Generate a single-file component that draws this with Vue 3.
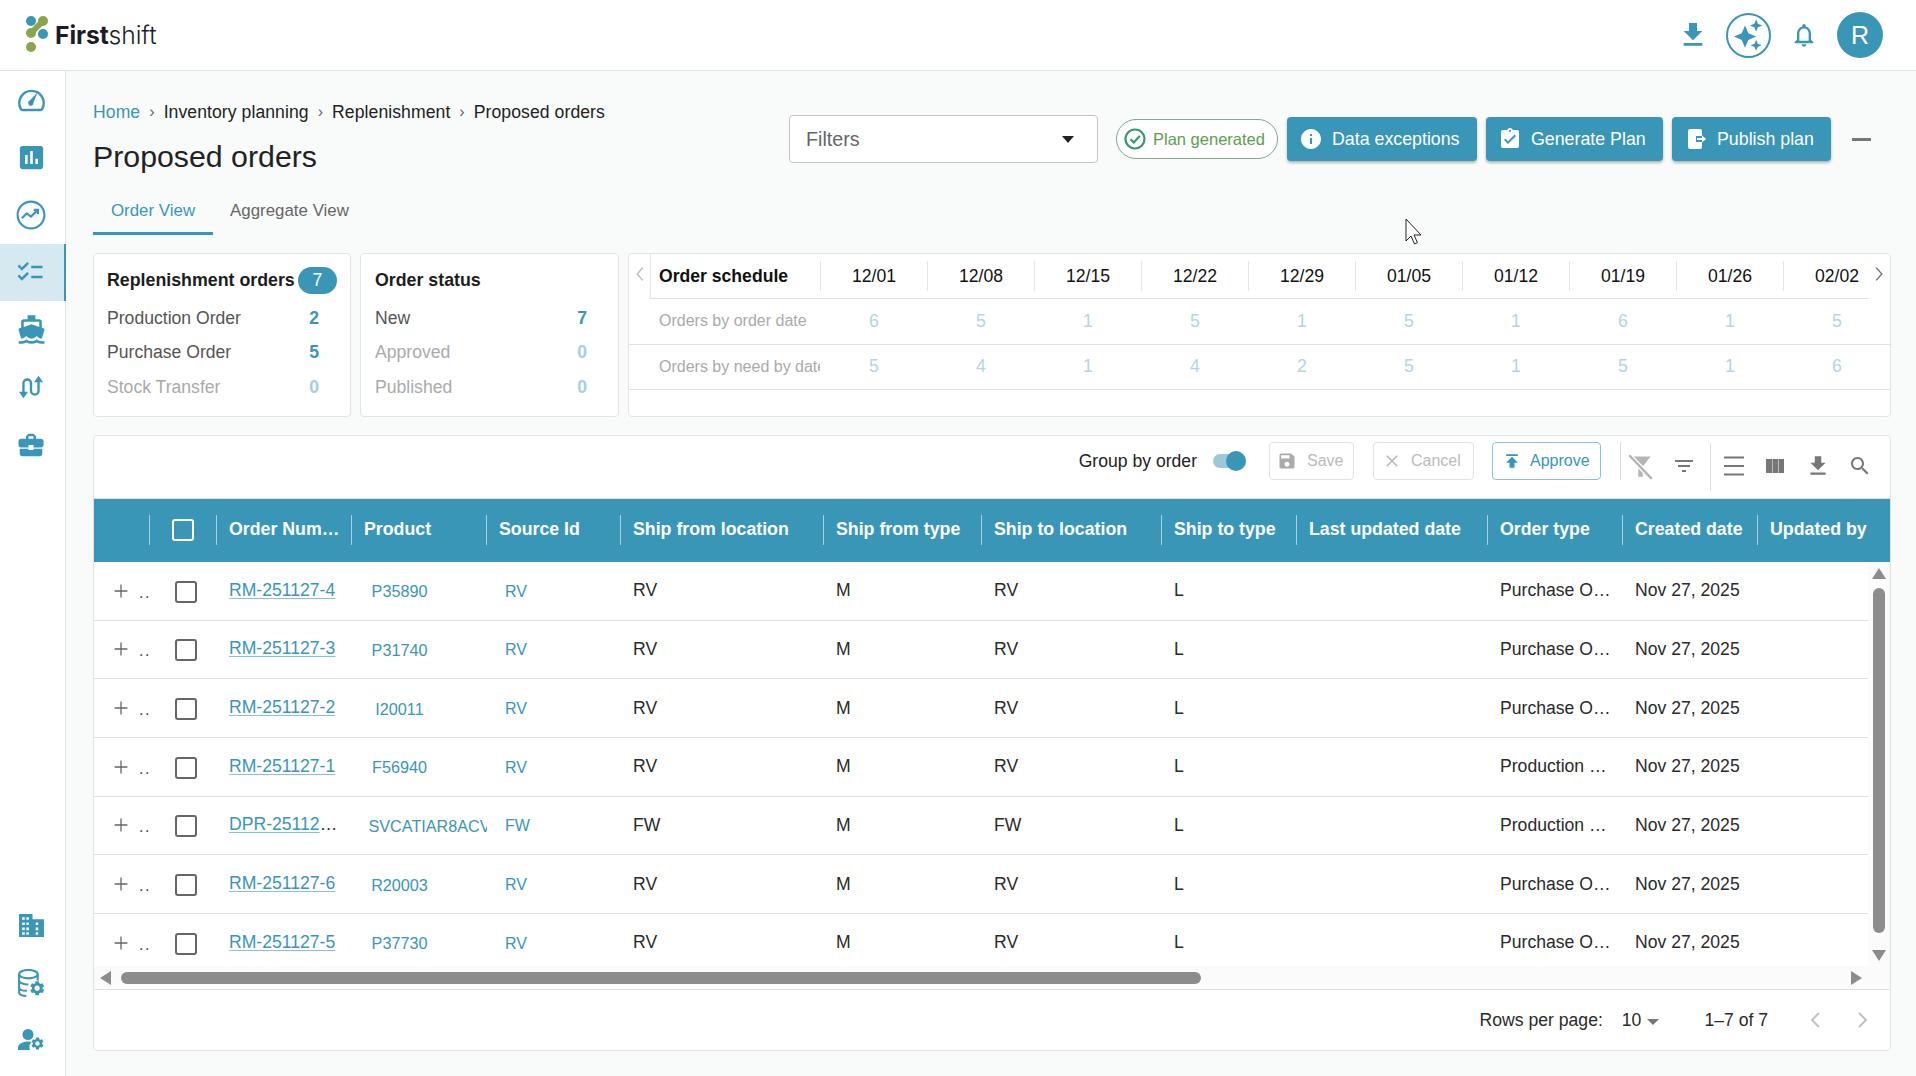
<script setup>
const gear = 'M19.14 12.94c.04-.3.06-.61.06-.94 0-.32-.02-.64-.07-.94l2.03-1.58c.18-.14.23-.41.12-.61l-1.92-3.32c-.12-.22-.37-.29-.59-.22l-2.39.96c-.5-.38-1.03-.7-1.62-.94l-.36-2.54c-.04-.24-.24-.41-.48-.41h-3.84c-.24 0-.43.17-.47.41l-.36 2.54c-.59.24-1.13.57-1.62.94l-2.39-.96c-.22-.08-.47 0-.59.22L2.74 8.87c-.12.21-.08.47.12.61l2.03 1.58c-.05.3-.09.63-.09.94s.02.64.07.94l-2.03 1.58c-.18.14-.23.41-.12.61l1.92 3.32c.12.22.37.29.59.22l2.39-.96c.5.38 1.03.7 1.62.94l.36 2.54c.05.24.24.41.48.41h3.84c.24 0 .44-.17.47-.41l.36-2.54c.59-.24 1.13-.56 1.62-.94l2.39.96c.22.08.47 0 .59-.22l1.92-3.32c.12-.22.07-.47-.12-.61l-2.01-1.58zM12 15.6c-1.98 0-3.6-1.62-3.6-3.6s1.62-3.6 3.6-3.6 3.6 1.62 3.6 3.6-1.62 3.6-3.6 3.6z'
const headers = ['Order Number', 'Product', 'Source Id', 'Ship from location', 'Ship from type', 'Ship to location', 'Ship to type', 'Last updated date', 'Order type', 'Created date', 'Updated by']
const rows = [
  ['RM-251127-4', 'P35890', 'RV', 'Purchase Order'],
  ['RM-251127-3', 'P31740', 'RV', 'Purchase Order'],
  ['RM-251127-2', 'I20011', 'RV', 'Purchase Order'],
  ['RM-251127-1', 'F56940', 'RV', 'Production Order'],
  ['DPR-251127-1', 'SVCATIAR8ACV', 'FW', 'Production Order'],
  ['RM-251127-6', 'R20003', 'RV', 'Purchase Order'],
  ['RM-251127-5', 'P37730', 'RV', 'Purchase Order'],
]
const dates = ['12/01', '12/08', '12/15', '12/22', '12/29', '01/05', '01/12', '01/19', '01/26', '02/02']
const byOrder = [6, 5, 1, 5, 1, 5, 1, 6, 1, 5]
const byNeed = [5, 4, 1, 4, 2, 5, 1, 5, 1, 6]
const kinds = [
  { label: 'Production Order', n: 2 },
  { label: 'Purchase Order', n: 5 },
  { label: 'Stock Transfer', n: 0 },
]
const statuses = [
  { label: 'New', n: 7 },
  { label: 'Approved', n: 0 },
  { label: 'Published', n: 0 },
]
</script>

<template>
  <div class="app">
    <header class="top">
      <div class="logo">
        <svg class="logo-mark" viewBox="0 0 30 40" width="30" height="40">
          <path d="M6 17 L18 5" stroke="#8aa64a" stroke-width="6" />
          <circle cx="6" cy="5" r="5" fill="#3a96b7" />
          <circle cx="18" cy="5" r="5" fill="#8aa64a" />
          <circle cx="6" cy="17" r="5" fill="#8aa64a" />
          <circle cx="18" cy="18" r="5" fill="#3a96b7" />
          <circle cx="6" cy="31" r="5" fill="#8aa64a" />
        </svg>
        <span class="logo-text"><b>First</b>shift</span>
      </div>
      <div class="top-icons">
        <svg class="ic-dl" viewBox="0 0 24 24" width="32" height="32"><path d="M19 9h-4V3H9v6H5l7 7 7-7zM5 18v2h14v-2H5z" /></svg>
        <span class="ai">
          <svg viewBox="0 0 24 24" width="38" height="38">
            <path d="M9.5 6 11.6 10.900 16.500 13 11.600 15.100 9.500 20 7.400 15.100 2.500 13 7.400 10.900z" />
            <path d="M16.500 2 17.600 4.900 20.500 6 17.600 7.100 16.500 10 15.400 7.100 12.500 6 15.400 4.900z" />
            <path d="M16.500 15 17.500 17.500 20 18.500 17.500 19.500 16.500 22 15.500 19.500 13 18.500 15.500 17.500z" />
          </svg>
        </span>
        <svg class="ic-bell" viewBox="0 0 24 24" width="28" height="28"><path d="M12 22c1.1 0 2-.9 2-2h-4c0 1.1.9 2 2 2zm6-6v-5c0-3.07-1.63-5.64-4.5-6.32V4c0-.83-.67-1.5-1.5-1.5s-1.5.67-1.5 1.5v.68C7.64 5.36 6 7.92 6 11v5l-2 2v1h16v-1l-2-2zm-2 1H8v-6c0-2.48 1.51-4.5 4-4.5s4 2.02 4 4.5v6z" /></svg>
        <span class="avatar">R</span>
      </div>
    </header>

    <div class="body">
      <nav class="side">
        <div class="side-group">
          <a class="side-item">
            <svg viewBox="0 0 28 28" width="31" height="31" class="stroke">
              <path d="M6 23.5h16a2 2 0 0 0 1.8-1.3A11 11 0 1 0 4.2 22.200a2 2 0 0 0 1.800 1.300z" stroke-width="2.200" />
              <path class="solid" d="M19.500 7.500 15.800 16.800a2.400 2.400 0 1 1-3.300-1.800z" />
            </svg>
          </a>
          <a class="side-item"><svg viewBox="0 0 24 24" width="31" height="31"><path d="M19 3H5c-1.100 0-2 .9-2 2v14c0 1.100.9 2 2 2h14c1.100 0 2-.9 2-2V5c0-1.100-.9-2-2-2zM9 17H7v-7h2v7zm4 0h-2V7h2v10zm4 0h-2v-4h2v4z" /></svg></a>
          <a class="side-item">
            <svg viewBox="0 0 28 28" width="30" height="30" class="stroke">
              <circle cx="14" cy="14" r="12.500" stroke-width="2" />
              <path d="M5.500 17 10 12.500 14 15.500 20 9.500M16.500 9.200H20.500V13" stroke-width="2" />
            </svg>
          </a>
          <a class="side-item active"><svg viewBox="0 0 24 24" width="30" height="30"><path d="M22 7h-9v2h9V7zm0 8h-9v2h9v-2zM5.540 11 2 7.460l1.410-1.410 2.120 2.120 4.240-4.240 1.410 1.410L5.540 11zm0 8L2 15.460l1.410-1.410 2.120 2.120 4.240-4.240 1.410 1.410L5.540 19z" /></svg></a>
          <a class="side-item"><svg viewBox="0 0 24 24" width="31" height="31"><path d="M20 21c-1.390 0-2.780-.47-4-1.320-2.440 1.710-5.560 1.710-8 0C6.780 20.530 5.390 21 4 21H2v2h2c1.380 0 2.740-.35 4-.99 2.520 1.290 5.480 1.290 8 0 1.260.65 2.620.99 4 .99h2v-2h-2zM3.950 19H4c1.600 0 3.020-.88 4-2 .98 1.120 2.400 2 4 2s3.020-.88 4-2c.98 1.120 2.400 2 4 2h.05l1.890-6.680c.08-.26.06-.54-.06-.78s-.34-.42-.6-.5L20 10.620V6c0-1.100-.9-2-2-2h-3V1H9v3H6c-1.100 0-2 .9-2 2v4.620l-1.290.42c-.26.08-.48.26-.6.5s-.15.52-.06.78L3.950 19zM6 6h12v3.970L12 8 6 9.970V6z" /></svg></a>
          <a class="side-item">
            <svg viewBox="0 0 26 26" width="28" height="28" class="stroke">
              <path d="M6 20V9.500a3.500 3.500 0 0 1 7 0v7a3.500 3.500 0 0 0 7 0V6" stroke-width="2.200" />
              <path class="solid" d="M1.800 17.500h8.400L6 23.500zM15.800 8.500h8.400L20 2.500z" />
            </svg>
          </a>
          <a class="side-item"><svg viewBox="0 0 24 24" width="30" height="30"><path d="M10 16v-1H3.010L3 19c0 1.110.89 2 2 2h14c1.110 0 2-.89 2-2v-4h-7v1h-4zm10-9h-4.010V5l-2-2h-4l-2 2v2H4c-1.100 0-2 .9-2 2v3c0 1.110.89 2 2 2h6v-2h4v2h6c1.100 0 2-.9 2-2V9c0-1.100-.9-2-2-2zm-6 0h-4V5h4v2z" /></svg></a>
        </div>
        <div class="side-group">
          <a class="side-item">
            <svg viewBox="0 0 26 24" width="27" height="25">
              <path fill-rule="evenodd" d="M1 1h13v5h11v17H1zM4 4v2.500h2.500V4zm4 0v2.500h2.500V4zM4 9v2.500h2.500V9zm4 0v2.500h2.500V9zm9 0v2.500h2.500V9zm-9 5v2.500h2.500V14zm-4 0v2.500h2.500V14zm13 0v2.500h2.500V14zM4 18.500V21h2.500v-2.500zm4 0V21h2.500v-2.500zm9 0V21h2.500v-2.500z" />
            </svg>
          </a>
          <a class="side-item">
            <svg viewBox="0 0 28 28" width="29" height="29" class="stroke">
              <ellipse cx="11" cy="6" rx="9" ry="4" stroke-width="2" />
              <path d="M2 6v18c0 1.500 3 3 7 3M2 12c0 2 4 4 9 4M2 18.500c0 2 3 3.500 7.500 3.500M20 6v6" stroke-width="2" />
              <svg x="11" y="11" width="17" height="17" viewBox="0 0 24 24"><path class="solid" :d="gear" /></svg>
            </svg>
          </a>
          <a class="side-item">
            <svg viewBox="0 0 28 24" width="28" height="24">
              <circle cx="11" cy="6.500" r="5.500" />
              <path d="M1 22v-2.500c0-3.500 5-6 10-6 1.200 0 2.300.1 3.300.4A8 8 0 0 0 13 22z" />
              <svg x="13" y="8" width="15" height="15" viewBox="0 0 24 24"><path :d="gear" /></svg>
            </svg>
          </a>
        </div>
      </nav>

      <main class="main">
        <section class="head">
          <div class="head-left">
            <div class="crumbs">
              <span class="home">Home</span><i>›</i><span>Inventory planning</span><i>›</i><span>Replenishment</span><i>›</i><span>Proposed orders</span>
            </div>
            <h1>Proposed orders</h1>
          </div>
          <div class="actions">
            <div class="filters"><span>Filters</span><b class="caret"></b></div>
            <div class="pill">
              <svg viewBox="0 0 24 24" width="24" height="24"><circle cx="12" cy="12" r="9.500" fill="none" stroke="#34996d" stroke-width="2.200" /><path d="M7.500 12.300 10.800 15.500 16.800 9" fill="none" stroke="#34996d" stroke-width="2.200" /></svg>
              <span>Plan generated</span>
            </div>
            <button class="btn w190"><svg viewBox="0 0 24 24" width="24" height="24"><path d="M12 2C6.480 2 2 6.480 2 12s4.480 10 10 10 10-4.480 10-10S17.520 2 12 2zm1 15h-2v-6h2v6zm0-8h-2V7h2v2z" /></svg>Data exceptions</button>
            <button class="btn w177"><svg viewBox="0 0 24 24" width="24" height="24"><path d="M19 3h-4.180C14.400 1.840 13.300 1 12 1c-1.300 0-2.400.84-2.820 2H5c-1.100 0-2 .9-2 2v14c0 1.100.9 2 2 2h14c1.100 0 2-.9 2-2V5c0-1.100-.9-2-2-2zm-7 0c.55 0 1 .45 1 1s-.45 1-1 1-1-.45-1-1 .45-1 1-1zm-2 14-4-4 1.410-1.410L10 14.170l6.590-6.590L18 9l-8 8z" /></svg>Generate Plan</button>
            <button class="btn w159"><svg viewBox="0 0 24 24" width="24" height="24"><path d="M6 2h10a2 2 0 0 1 2 2v5h-6v6h6v5a2 2 0 0 1-2 2H6a2 2 0 0 1-2-2V4a2 2 0 0 1 2-2z" /><path d="M13 11h5V8.500l4 3.500-4 3.500V13h-5z" /></svg>Publish plan</button>
            <span class="minus"></span>
          </div>
        </section>

        <div class="tabs">
          <span class="tab on">Order View</span>
          <span class="tab">Aggregate View</span>
        </div>

        <section class="cards">
          <div class="card c-sum">
            <div class="c-title">Replenishment orders<span class="badge">7</span></div>
            <div v-for="k in kinds" :key="k.label" class="c-row" :class="{ off: !k.n }"><span>{{ k.label }}</span><b>{{ k.n }}</b></div>
          </div>
          <div class="card c-sum">
            <div class="c-title">Order status</div>
            <div v-for="k in statuses" :key="k.label" class="c-row" :class="{ off: !k.n }"><span>{{ k.label }}</span><b>{{ k.n }}</b></div>
          </div>
          <div class="card sched">
            <div class="s-head">
              <span class="s-arrow faint"><svg viewBox="0 0 12 20" width="10" height="16"><path d="M9.500 2 2.500 10l7 8" /></svg></span>
              <div class="s-grid s-dates">
                <b class="s-name">Order schedule</b>
                <span v-for="d in dates" :key="d" class="s-date">{{ d }}</span>
              </div>
              <span class="s-arrow"><svg viewBox="0 0 12 20" width="10" height="16"><path d="M2.500 2l7 8-7 8" /></svg></span>
            </div>
            <div class="s-line">
              <div class="s-grid">
                <span class="s-label">Orders by order date</span>
                <span v-for="(n, i) in byOrder" :key="i" class="s-num">{{ n }}</span>
              </div>
            </div>
            <div class="s-line">
              <div class="s-grid">
                <span class="s-label">Orders by need by date</span>
                <span v-for="(n, i) in byNeed" :key="i" class="s-num">{{ n }}</span>
              </div>
            </div>
          </div>
        </section>

        <section class="card table">
          <div class="tools">
            <span class="group">Group by order</span>
            <span class="toggle"><i></i></span>
            <span class="t-btn save"><svg viewBox="0 0 24 24" width="20" height="20"><path d="M17 3H5c-1.110 0-2 .9-2 2v14c0 1.100.89 2 2 2h14c1.100 0 2-.9 2-2V7l-4-4zm-5 16c-1.660 0-3-1.340-3-3s1.340-3 3-3 3 1.340 3 3-1.340 3-3 3zm3-10H5V5h10v4z" /></svg>Save</span>
            <span class="t-btn cancel"><svg viewBox="0 0 24 24" width="20" height="20"><path d="M19 6.410 17.590 5 12 10.590 6.410 5 5 6.410 10.590 12 5 17.590 6.410 19 12 13.410 17.590 19 19 17.590 13.410 12z" /></svg>Cancel</span>
            <span class="t-btn approve"><svg viewBox="0 0 24 24" width="20" height="20"><path d="M5 4v2h14V4H5zm0 10h4v6h6v-6h4l-7-7-7 7z" /></svg>Approve</span>
            <span class="rule r1"></span>
            <svg class="ti m6 pale" viewBox="0 0 24 24" width="27" height="27"><path d="M3 3h18l-7 9v9h-4v-9z" /><path d="M2 2 22 23" stroke="#fff" stroke-width="4.500" /><path d="M2 2 22 23" stroke="#b5b5b5" stroke-width="2.200" /></svg>
            <svg class="ti m18" viewBox="0 0 24 24" width="24" height="24"><path d="M10 18h4v-2h-4v2zM3 6v2h18V6H3zm3 7h12v-2H6v2z" /></svg>
            <span class="rule r2"></span>
            <svg class="ti m11" viewBox="0 0 24 24" width="24" height="24"><path d="M2 2.500h20v2H2zM2 11h20v2H2zM2 19.500h20v2H2z" /></svg>
            <svg class="ti m17" viewBox="0 0 24 24" width="24" height="24"><path d="M3 5h6v14H3zM9.500 5h5.500v14H9.500zM15.500 5H21v14h-5.500z" /></svg>
            <svg class="ti m18" viewBox="0 0 24 24" width="26" height="26"><path d="M19 9h-4V3H9v6H5l7 7 7-7zM5 18v2h14v-2H5z" /></svg>
            <svg class="ti m17" viewBox="0 0 24 24" width="24" height="24"><path d="M15.500 14h-.79l-.28-.27C15.410 12.590 16 11.110 16 9.500 16 5.910 13.090 3 9.500 3S3 5.910 3 9.500 5.910 16 9.500 16c1.610 0 3.090-.59 4.230-1.570l.27.28v.79l5 4.990L20.490 19l-4.990-5zm-6 0C7.010 14 5 11.990 5 9.500S7.010 5 9.500 5 14 7.010 14 9.500 11.990 14 9.500 14z" /></svg>
          </div>

          <div class="cols thead">
            <span class="th"></span>
            <span class="th"><i class="box hbox"></i></span>
            <span v-for="h in headers" :key="h" class="th"><b>{{ h }}</b></span>
          </div>

          <div class="tbody">
            <div class="rows">
              <div v-for="r in rows" :key="r[0]" class="row">
                <div class="cols">
                  <span class="td exp"><svg viewBox="0 0 24 24" width="22" height="22"><path d="M19 12.700h-6.300V19h-1.400v-6.300H5v-1.400h6.300V5h1.400v6.300H19z" /></svg><em>..</em></span>
                  <span class="td chk"><i class="box"></i></span>
                  <span class="td link"><a>{{ r[0] }}</a></span>
                  <span class="td prod"><span>{{ r[1] }}</span></span>
                  <span class="td src">{{ r[2] }}</span>
                  <span class="td">{{ r[2] }}</span>
                  <span class="td">M</span>
                  <span class="td">{{ r[2] }}</span>
                  <span class="td">L</span>
                  <span class="td"></span>
                  <span class="td">{{ r[3] }}</span>
                  <span class="td">Nov 27, 2025</span>
                  <span class="td"></span>
                </div>
              </div>
            </div>
            <div class="vbar">
              <i class="tri up"></i>
              <i class="v-thumb"></i>
              <i class="tri down"></i>
            </div>
          </div>

          <div class="hbar">
            <i class="tri left"></i>
            <i class="h-thumb"></i>
            <i class="tri right"></i>
          </div>

          <div class="pager">
            <span>Rows per page:</span>
            <span class="per">10</span><i class="mini"></i>
            <span class="count">1–7 of 7</span>
            <svg class="chev first" viewBox="0 0 12 20" width="12" height="20"><path d="M10 3 3 10l7 7" /></svg>
            <svg class="chev" viewBox="0 0 12 20" width="12" height="20"><path d="M2 3l7 7-7 7" /></svg>
          </div>
        </section>
      </main>
    </div>

    <svg class="cursor" viewBox="0 0 18 28" width="18" height="28"><path d="M1 1v22l5-5 3.500 8 3-1.300L9 17h7z" fill="#fff" stroke="#222" stroke-width="1" /></svg>
  </div>
</template>

<style>
html, body { margin: 0; overflow: hidden; }
</style>

<style scoped>
.app {
  width: 1916px;
  height: 1076px;
  position: relative;
  display: flex;
  flex-direction: column;
  font-family: "Liberation Sans", Arial, sans-serif;
  color: #222;
  background: #f9fbfb;
  overflow: hidden;
}
.top {
  height: 70px;
  flex: none;
  box-sizing: content-box;
  background: #fff;
  border-bottom: 1px solid #e0e3e3;
  display: flex;
  align-items: center;
  justify-content: space-between;
}
.logo { display: flex; align-items: center; margin-left: 25px; }
.logo-mark { display: block; margin-top: 2px; }
.logo-text {
  font-family: Inter, sans-serif;
  font-size: 24.700px;
  font-weight: 300;
  color: #1b1d26;
  margin-left: 0;
  letter-spacing: -0.1px;
}
.logo-text b { font-weight: 700; }
.top-icons { display: flex; align-items: center; margin-right: 33px; }
.top-icons svg { fill: #3a96b7; display: block; }
.ic-dl { margin-right: 17px; }
.ai {
  width: 41px;
  height: 41px;
  border: 2px solid #3a96b7;
  border-radius: 50%;
  display: flex;
  align-items: center;
  justify-content: center;
}
.ic-bell { margin-left: 19px; margin-right: 19px; }
.avatar {
  width: 46px;
  height: 46px;
  border-radius: 50%;
  background: #3a96b7;
  color: #fff;
  font-size: 25px;
  display: flex;
  align-items: center;
  justify-content: center;
}
.body { flex: 1; display: flex; min-height: 0; }
.side {
  width: 65px;
  flex: none;
  background: #fff;
  border-right: 1px solid #e0e3e3;
  display: flex;
  flex-direction: column;
  justify-content: space-between;
  padding: 0 0 7px;
}
.side-item {
  height: 57.5px;
  display: flex;
  align-items: center;
  justify-content: center;
  padding-right: 3px;
  box-sizing: border-box;
}
.side-item svg { fill: #3a96b7; display: block; }
.side-item .stroke { fill: none; stroke: #3a96b7; }
.side-item .solid { fill: #3a96b7; stroke: none; }
.side-item.active { background: #d7e9f0; border-right: 2px solid #3a96b7; margin-right: -1px; padding-right: 4px; }
.main { flex: 1; min-width: 0; padding: 29px 25px 0 27px; display: flex; flex-direction: column; }
.head { display: flex; justify-content: space-between; align-items: flex-start; }
.crumbs { display: flex; align-items: center; font-size: 17.600px; height: 24px; white-space: nowrap; letter-spacing: 0.07px; }
.crumbs .home { color: #3a96b7; }
.crumbs i { font-style: normal; color: #666; margin: 0 9px; font-size: 16px; }
h1 { margin: 13px 0 0; font-size: 30.300px; font-weight: 400; line-height: 40px; color: #222; }
.actions { display: flex; align-items: center; margin-top: 15px; margin-right: 20px; }
.filters {
  width: 309px;
  height: 48px;
  box-sizing: border-box;
  border: 1px solid #c4c4c4;
  border-radius: 4px;
  background: #fff;
  display: flex;
  align-items: center;
  justify-content: space-between;
  padding: 0 23px 0 16px;
  font-size: 19.700px;
  color: #666;
}
.caret { width: 0; height: 0; border-left: 6.500px solid transparent; border-right: 6.500px solid transparent; border-top: 7px solid #222; }
.pill {
  width: 162px;
  height: 40px;
  box-sizing: border-box;
  margin-left: 18px;
  border: 1px solid #7fa88f;
  border-radius: 20px;
  display: flex;
  align-items: center;
  padding-left: 6px;
  font-size: 16.500px;
  color: #5a9e4e;
  white-space: nowrap;
  background: #fff;
}
.pill span { margin-left: 6px; margin-top: 1px; }
.btn {
  height: 44px;
  box-sizing: border-box;
  margin-left: 9px;
  border: 0;
  border-radius: 4px;
  background: #3a96b7;
  color: #fff;
  font: 17.800px "Liberation Sans", Arial, sans-serif;
  display: flex;
  align-items: center;
  padding: 0 0 0 12px;
  box-shadow: 0 2px 3px rgba(0, 0, 0, .28);
  white-space: nowrap;
}
.btn svg { fill: #fff; margin-right: 9px; flex: none; }
.w190 { width: 190px; }
.w177 { width: 177px; }
.w159 { width: 159px; }
.minus { width: 19px; height: 3px; background: #777; margin-left: 21px; }
.tabs { display: flex; margin-top: 0; height: 58px; align-items: stretch; }
.tab {
  width: 120px;
  box-sizing: border-box;
  text-align: center;
  font-size: 16.900px;
  color: #666;
  padding-top: 24px;
  white-space: nowrap;
}
.tab.on { color: #3a96b7; border-bottom: 3px solid #3a96b7; }
.tab + .tab { width: auto; margin-left: 17px; }
.cards { display: flex; gap: 9px; margin-top: 18px; height: 164px; }
.card { background: #fff; border: 1px solid #e2e4e4; border-radius: 4px; box-sizing: border-box; }
.c-sum { width: 258px; flex: none; padding: 13px 13px 0; }
.c-sum + .c-sum { width: 259px; padding-left: 14px; }
.c-title {
  height: 27px;
  display: flex;
  align-items: center;
  font-weight: 700;
  font-size: 17.800px;
  color: #1d1d1d;
  white-space: nowrap;
  margin-bottom: 7px;
  position: relative;
}
.badge {
  width: 40px;
  height: 27px;
  border-radius: 14px;
  background: #3a96b7;
  color: #fff;
  font-weight: 400;
  display: flex;
  align-items: center;
  justify-content: center;
  margin-left: 3px;
}
.c-row {
  height: 34.500px;
  display: flex;
  align-items: center;
  justify-content: space-between;
  font-size: 17.600px;
  color: #555;
  padding-right: 18px;
}
.c-row b { color: #3a96b7; font-size: 17.600px; }
.c-row.off span { color: #aaa; }
.c-row.off b { color: #a5cfde; }
.sched { flex: 1; min-width: 0; overflow: hidden; }
.s-head { display: flex; height: 45px; }
.s-arrow {
  width: 22px;
  flex: none;
  display: flex;
  justify-content: center;
  padding-top: 12px;
  box-sizing: border-box;
}
.s-arrow svg { fill: none; stroke: #777; stroke-width: 1.800; display: block; }
.s-arrow.faint { border-right: 1px solid #e2e4e4; }
.s-arrow.faint svg { stroke: #bbb; }
.s-grid {
  display: grid;
  grid-template-columns: 169px repeat(10, 107px);
  align-items: center;
}
.s-dates {
  flex: 1;
  min-width: 0;
  overflow: hidden;
  border-bottom: 1px solid #e0e0e0;
  height: 45px;
  box-sizing: border-box;
  margin-bottom: 0;
}
.s-name { padding-left: 8px; font-size: 17.600px; color: #111; white-space: nowrap; }
.s-date {
  height: 30px;
  line-height: 30px;
  border-left: 1px solid #e5e5e5;
  text-align: center;
  font-size: 17.600px;
  color: #111;
  margin-left: 0;
}
.s-line { height: 44.500px; border-bottom: 1px solid #e0e0e0; box-sizing: content-box; padding-left: 22px; overflow: hidden; }
.s-line .s-grid { height: 44px; }
.s-label {
  padding-left: 8px;
  font-size: 16px;
  color: #aaa;
  white-space: nowrap;
  overflow: hidden;
}
.s-num { text-align: center; font-size: 17.600px; color: #b0d6e3; padding-left: 1px; }
.table { margin-top: 18px; flex: none; height: 616px; display: flex; flex-direction: column; overflow: hidden; }
.tools {
  height: 62px;
  flex: none;
  display: flex;
  align-items: center;
  justify-content: flex-end;
  padding: 0 18px 12px 0;
  box-sizing: border-box;
  font-size: 17.600px;
}
.group { white-space: nowrap; }
.toggle { width: 33px; height: 14px; border-radius: 7px; background: #9cc9da; margin-left: 16px; position: relative; flex: none; }
.toggle i { position: absolute; right: 0; top: -3px; width: 20px; height: 20px; border-radius: 50%; background: #3a96b7; }
.t-btn {
  height: 38px;
  box-sizing: border-box;
  display: flex;
  align-items: center;
  border: 1px solid #e2e2e2;
  border-radius: 4px;
  font-size: 16px;
  color: #bbb;
  white-space: nowrap;
  padding-left: 7px;
  margin-bottom: 0;
}
.t-btn svg { fill: #aaa; margin-right: 10px; flex: none; }
.save { width: 85px; margin-left: 23px; }
.cancel { width: 101px; margin-left: 19px; padding-left: 8px; }
.cancel svg { fill: #bbb; margin-right: 9px; }
.approve { width: 109px; margin-left: 18px; border-color: #8cc0d4; color: #3a96b7; padding-left: 9px; }
.approve svg { fill: #3a96b7; margin-right: 8px; }
.rule { width: 1px; background: #ddd; flex: none; }
.r1 { height: 38px; margin-left: 19px; }
.r2 { height: 48px; margin-left: 14px; margin-top: 11px; }
.ti { fill: #777; flex: none; margin-top: 10px; display: block; }
.pale { fill: #b5b5b5; }
.m6 { margin-left: 6px; }
.m11 { margin-left: 11px; }
.m17 { margin-left: 17px; }
.m18 { margin-left: 18px; }
.cols {
  display: grid;
  grid-template-columns: 56px 67px 135px 135px 134px 203px 158px 180px 135px 191px 135px 135px 133px;
  align-items: center;
  width: 1797px;
}
.thead { height: 63px; flex: none; background: #3a96b7; border-top: 1px solid #e0e0e0; box-sizing: content-box; }
.th {
  height: 30px;
  border-right: 1px solid #a9cfdd;
  display: flex;
  align-items: center;
  padding-left: 12px;
  color: #fff;
  font-size: 17.750px;
  box-sizing: border-box;
  min-width: 0;
  white-space: nowrap;
  margin-top: -2px;
}
.th b { overflow: hidden; text-overflow: ellipsis; padding-right: 7px; }
.th:nth-child(2) { padding-left: 22px; }
.th:last-child { border: 0; }
.box { display: block; width: 22px; height: 22px; box-sizing: border-box; border: 2.500px solid #666; border-radius: 3px; }
.hbox { border-color: #fff; background: #3a96b7; }
.tbody { height: 404px; flex: none; display: flex; overflow: hidden; }
.rows { width: 1774px; flex: none; overflow: hidden; }
.row { height: 58.650px; box-sizing: border-box; border-bottom: 1px solid #e0e0e0; overflow: hidden; }
.row .cols { height: 59.650px; margin-top: -1px; }
.td {
  font-size: 17.600px;
  color: #2a2a2a;
  padding: 0 12px;
  white-space: nowrap;
  overflow: hidden;
  text-overflow: ellipsis;
  min-width: 0;
  box-sizing: border-box;
}
.exp { display: flex; align-items: center; padding: 0 0 0 16px; overflow: visible; color: #555; }
.exp svg { fill: #666; flex: none; }
.exp em { font-style: normal; font-size: 16px; margin-left: 7px; letter-spacing: 1.500px; color: #444; margin-top: 4px; }
.chk { padding-left: 25px; overflow: visible; }
.chk .box { margin-top: 2px; }
.link a { color: #3a96b7; text-decoration: underline; text-decoration-color: #8cc0d4; text-underline-offset: 2px; font-size: 17.600px; }
.link { margin-top: -1px; }
.prod { padding: 0 0 0 16.500px; font-size: 16.200px; color: #3a96b7; margin-top: 2px; text-overflow: clip; }
.prod span { display: inline-block; min-width: 62px; text-align: center; }
.src { padding-left: 18px; font-size: 16px; color: #3a96b7; margin-top: 2px; }
.vbar { width: 22px; flex: none; background: #fbfbfb; position: relative; display: flex; flex-direction: column; align-items: center; }
.tri { display: block; width: 0; height: 0; flex: none; }
.up { border: 7px solid transparent; border-top: 0; border-bottom: 11px solid #8c8c8c; margin-top: 6px; }
.down { border: 7px solid transparent; border-bottom: 0; border-top: 11px solid #8c8c8c; margin-top: 17px; }
.v-thumb { display: block; width: 12px; height: 345px; border-radius: 6px; background: #8c8c8c; margin-top: 9px; flex: none; }
.hbar { height: 23px; flex: none; background: #fbfbfb; display: flex; align-items: center; border-bottom: 1px solid #e0e0e0; box-sizing: content-box; position: relative; }
.left { border: 7px solid transparent; border-left: 0; border-right: 11px solid #8c8c8c; margin-left: 6px; }
.right { border: 7px solid transparent; border-right: 0; border-left: 11px solid #8c8c8c; margin-left: 650px; }
.h-thumb { display: block; width: 1080px; height: 12px; border-radius: 6px; background: #8c8c8c; margin-left: 10px; flex: none; }
.pager {
  flex: 1;
  display: flex;
  align-items: center;
  justify-content: flex-end;
  font-size: 17.600px;
  color: #2a2a2a;
  padding-right: 21px;
  white-space: nowrap;
}
.per { margin-left: 19px; }
.mini { width: 0; height: 0; border-left: 6px solid transparent; border-right: 6px solid transparent; border-top: 6px solid #777; margin-left: 6px; margin-top: 3px; }
.count { margin-left: 45px; }
.chev { fill: none; stroke: #c2c2c2; stroke-width: 2; margin-left: 36px; }
.first { margin-left: 41px; }
.cursor { position: absolute; left: 1405px; top: 218px; }
</style>
